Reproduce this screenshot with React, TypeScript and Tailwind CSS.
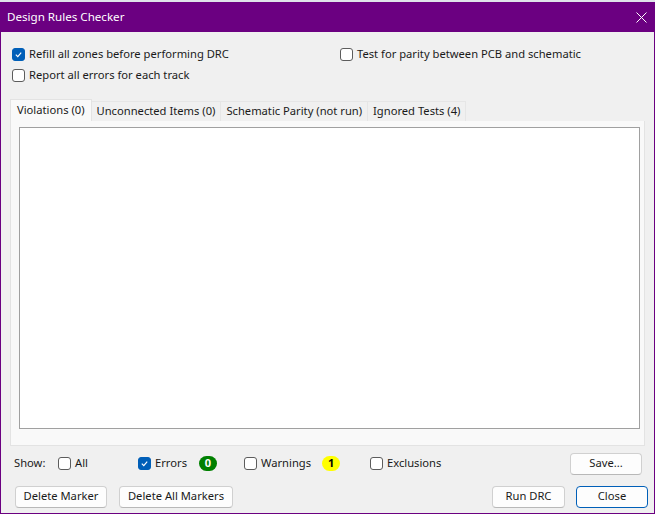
import { useState } from "react";

function Check({ checked, label }: { checked?: boolean; label: string }) {
  return (
    <label className="flex items-center gap-[4px]">
      <span
        className={`w-[13px] h-[13px] rounded-[3px] flex items-center justify-center ${
          checked ? "bg-[#005fb8] border border-[#005fb8]" : "bg-white border border-[#5c5c5c]"
        }`}
      >
        {checked && (
          <svg width="9" height="9" viewBox="0 0 10 10">
            <path d="M2 5.2 L4.2 7.3 L8 2.8" fill="none" stroke="white" strokeWidth="1.3" />
          </svg>
        )}
      </span>
      <span>{label}</span>
    </label>
  );
}

function Btn({ label, width, primary }: { label: string; width: string; primary?: boolean }) {
  return (
    <button
      className={`${width} h-[22px] rounded-[4px] bg-[#fdfdfd] text-[#1a1a1a] ${
        primary ? "border border-[#005fb8]" : "border border-[#d0d0d0] border-b-[#b8b8b8]"
      }`}
    >
      {label}
    </button>
  );
}

const tabs = ["Violations (0)", "Unconnected Items (0)", "Schematic Parity (not run)", "Ignored Tests (4)"];

export default function App() {
  const [active] = useState(0);
  return (
    <div
      className="w-[655px] h-[514px] flex flex-col bg-[#f0f0f0] text-[11.2px] text-[#1a1a1a] overflow-hidden"
      style={{ fontFamily: '"Noto Sans", "Open Sans", sans-serif' }}
    >
      <div className="h-[2px] bg-[#dfe3ea]" />
      <div className="h-[30px] bg-[#6b0081] flex items-center justify-between pl-[7px] pr-[8px] text-white text-[11.6px]">
        <span>Design Rules Checker</span>
        <svg width="11" height="11" viewBox="0 0 11 11">
          <path d="M0.5 0.5 L10.5 10.5 M10.5 0.5 L0.5 10.5" stroke="white" strokeWidth="1" />
        </svg>
      </div>

      <div className="flex-1 flex flex-col border-x border-b border-[#6b0081] px-[9px]">
        <div className="flex pt-[14px]">
          <div className="w-[319px] flex flex-col gap-[4px] pl-[2px]">
            <Check checked label="Refill all zones before performing DRC" />
            <Check label="Report all errors for each track" />
          </div>
          <div className="pl-[11px]">
            <Check label="Test for parity between PCB and schematic" />
          </div>
        </div>

        <div className="flex items-end mt-[15px] h-[22px]">
          {tabs.map((t, i) => (
            <div
              key={t}
              className={
                i === active
                  ? "h-[22px] px-[6px] bg-[#f9f9f9] border-x border-t border-[#e3e3e3] flex items-center"
                  : "h-[20px] px-[5px] bg-[#f0f0f0] border-r border-t border-[#e6e6e6] flex items-center"
              }
            >
              {t}
            </div>
          ))}
        </div>
        <div className="h-[325px] bg-[#f9f9f9] border border-t-0 border-[#e3e3e3] pl-[8px] pr-[4px] pt-[6px]">
          <div className="h-[302px] bg-white border border-[#a0a0a0]" />
        </div>

        <div className="flex items-center h-[36px] pl-[4px]">
          <span className="w-[44px]">Show:</span>
          <div className="w-[80px]">
            <Check label="All" />
          </div>
          <div className="w-[106px] flex items-center">
            <Check checked label="Errors" />
            <span className="ml-[12px] w-[18px] h-[15px] rounded-full bg-[#008000] text-white font-bold text-[11px] flex items-center justify-center">
              0
            </span>
          </div>
          <div className="w-[126px] flex items-center">
            <Check label="Warnings" />
            <span className="ml-[11px] w-[18px] h-[15px] rounded-full bg-[#ffff00] text-black text-[11px] font-bold flex items-center justify-center">
              1
            </span>
          </div>
          <Check label="Exclusions" />
          <div className="ml-auto mr-[3px]">
            <Btn label="Save..." width="w-[72px]" />
          </div>
        </div>

        <div className="flex items-center h-[30px] pl-[5px]">
          <Btn label="Delete Marker" width="w-[92px]" />
          <div className="ml-[12px]">
            <Btn label="Delete All Markers" width="w-[114px]" />
          </div>
          <div className="ml-auto flex gap-[11px] -mr-[3px]">
            <Btn label="Run DRC" width="w-[73px]" />
            <Btn label="Close" width="w-[72px]" primary />
          </div>
        </div>
      </div>
    </div>
  );
}
